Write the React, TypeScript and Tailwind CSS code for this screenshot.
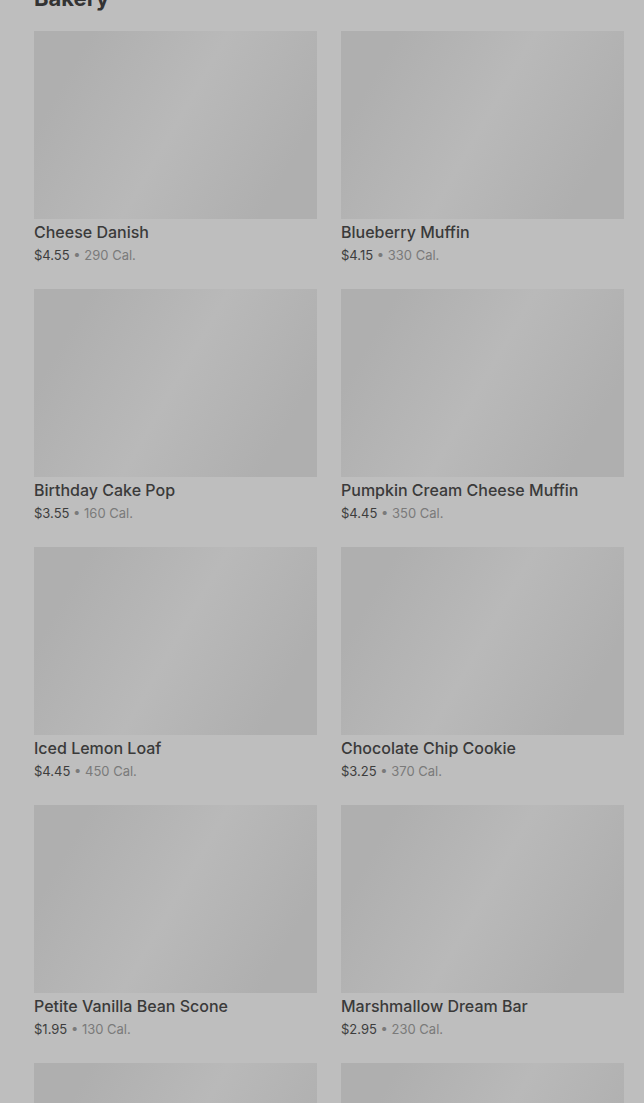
import React from 'react';

const items = [
  { name: 'Cheese Danish', price: '$4.55', cal: '290 Cal.' },
  { name: 'Blueberry Muffin', price: '$4.15', cal: '330 Cal.' },
  { name: 'Birthday Cake Pop', price: '$3.55', cal: '160 Cal.' },
  { name: 'Pumpkin Cream Cheese Muffin', price: '$4.45', cal: '350 Cal.' },
  { name: 'Iced Lemon Loaf', price: '$4.45', cal: '450 Cal.' },
  { name: 'Chocolate Chip Cookie', price: '$3.25', cal: '370 Cal.' },
  { name: 'Petite Vanilla Bean Scone', price: '$1.95', cal: '130 Cal.' },
  { name: 'Marshmallow Dream Bar', price: '$2.95', cal: '230 Cal.' },
  { name: '', price: '', cal: '' },
  { name: '', price: '', cal: '' },
];

function ProductCard({ name, price, cal }: { name: string; price: string; cal: string }) {
  return (
    <div className="flex flex-col">
      <div className="h-[188px] w-full bg-[linear-gradient(120deg,#afafaf_15%,#b9b9b9_50%,#afafaf_85%)]" />
      {name && (
        <div className="pt-[2px]">
          <p className="text-[16px] font-medium leading-[22px] text-[#3a3a3a]">{name}</p>
          <p className="mt-[3px] text-[13px] leading-[18px] text-[#3d3d3d]">
            {price} <span className="text-[#7a7a7a]">• {cal}</span>
          </p>
        </div>
      )}
    </div>
  );
}

export default function App() {
  return (
    <div className="h-[1103px] overflow-hidden bg-[#bebebe] pl-[34px] pr-[20px] font-['Inter','Noto_Sans',sans-serif]">
      <h2 className="-mt-[16px] mb-[19px] text-[22px] font-bold leading-[28px] text-[#333333]">Bakery</h2>
      <div className="grid grid-cols-2 gap-x-[24px] gap-y-[25px]">
        {items.map((item, i) => (
          <ProductCard key={i} {...item} />
        ))}
      </div>
    </div>
  );
}
